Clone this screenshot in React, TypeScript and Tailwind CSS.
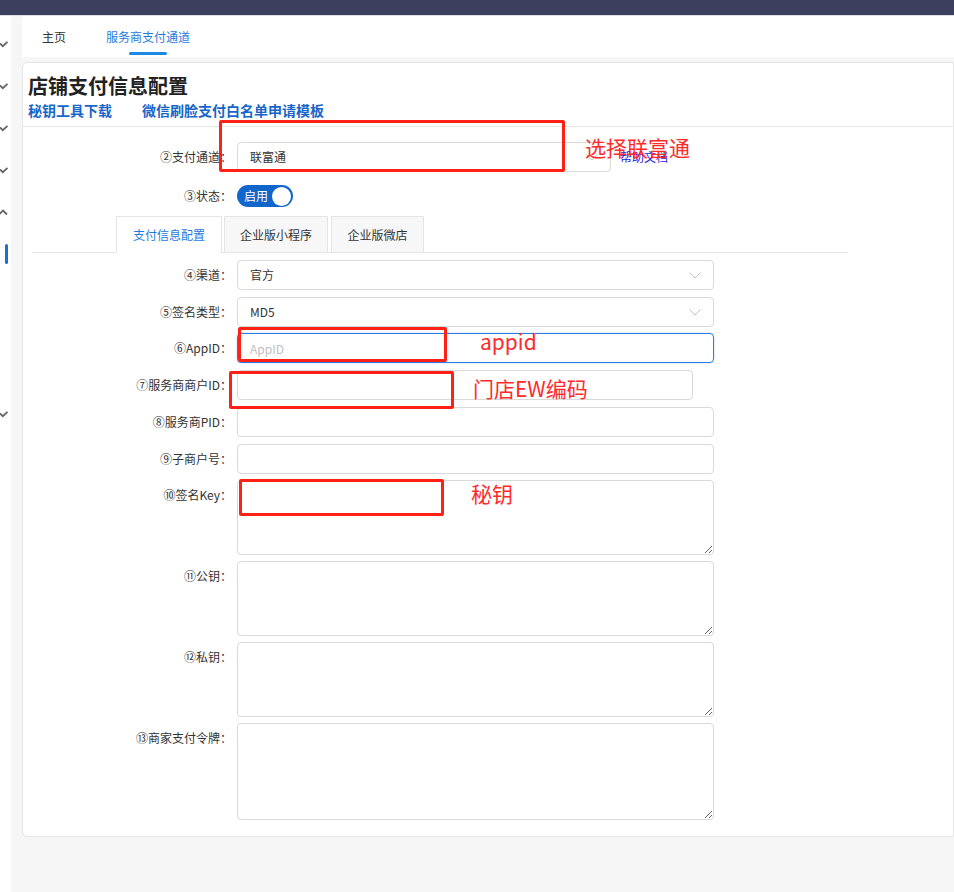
import React from "react";

function Chevron({ up = false }: { up?: boolean }) {
  return (
    <svg width="9" height="7" viewBox="0 0 9 7" className="block">
      {up ? (
        <path d="M-1 5.5 L3 1.5 L7 5.5" fill="none" stroke="#666" strokeWidth="1.8" />
      ) : (
        <path d="M0 2.5 L2.8 5.2 L7.5 0.8" fill="none" stroke="#666" strokeWidth="1.8" />
      )}
    </svg>
  );
}

function SelectArrow() {
  return (
    <svg width="12" height="7" viewBox="0 0 12 7">
      <path d="M0.5 0.5 L6 6 L11.5 0.5" fill="none" stroke="#c4c4c4" strokeWidth="1" />
    </svg>
  );
}

function Label({ text }: { text: string }) {
  return (
    <div className="w-[214px] shrink-0 text-right pr-[5px] text-[12px] leading-[30px] whitespace-nowrap text-[#333]">
      {text}
    </div>
  );
}

function SelectBox({ value, width = "w-[477px]" }: { value: string; width?: string }) {
  return (
    <div
      className={`${width} h-[30px] border border-[#d9d9d9] rounded-[4px] flex items-center justify-between pl-[12px] pr-[12px] text-[12px] text-[#333] bg-white`}
    >
      <span>{value}</span>
      <SelectArrow />
    </div>
  );
}

export default function App() {
  return (
    <div className="relative w-[954px] h-[892px] overflow-hidden bg-[#f6f6f6] font-['Noto_Sans_CJK_SC',sans-serif] text-[#333]">
      <div className="h-[15px] bg-[#3d3f5f]" />
      <div className="h-[1px] bg-[#dcdce4]" />
      <div className="flex h-[876px]">
        <aside className="w-[11px] shrink-0 bg-white flex flex-col pt-[7px] overflow-hidden">
          <div className="h-[42px] flex items-center"><Chevron /></div>
          <div className="h-[42px] flex items-center"><Chevron /></div>
          <div className="h-[42px] flex items-center"><Chevron /></div>
          <div className="h-[42px] flex items-center"><Chevron /></div>
          <div className="h-[42px] flex items-center"><Chevron up /></div>
          <div className="h-[42px] flex items-center pl-[5px]">
            <div className="w-[3px] h-[20px] rounded-[2px] bg-[#1a6fd9]" />
          </div>
          <div className="h-[118px]" />
          <div className="h-[42px] flex items-center"><Chevron /></div>
        </aside>
        <main className="flex-1 pl-[11px]">
          <div className="h-[41px] bg-white rounded-tl-[4px] flex items-stretch pl-[20px] text-[12px]">
            <div className="flex items-center text-[#333]">主页</div>
            <div className="relative flex items-center ml-[40px] text-[#1f7ae0]">
              服务商支付通道
              <div className="absolute bottom-[2px] left-1/2 -translate-x-1/2 w-[38px] h-[3px] rounded-[2px] bg-[#1e88e5]" />
            </div>
          </div>
          <div className="mt-[5px] h-[775px] bg-white border border-[#e6e6e6] rounded-l-[5px]">
            <div className="pl-[5px] pt-[9px] pb-[6px] border-b border-[#e8e8e8]">
              <div className="text-[20px] leading-[28px] font-bold text-[#222]">店铺支付信息配置</div>
              <div className="flex text-[14px] leading-[20px] font-bold text-[#1766c8]">
                <span>秘钥工具下载</span>
                <span className="ml-[30px]">微信刷脸支付白名单申请模板</span>
              </div>
            </div>

            <div className="pt-[15px]">
              <div className="flex items-center">
                <Label text="②支付通道：" />
                <SelectBox value="联富通" width="w-[374px]" />
                <span className="ml-[9px] text-[12px] text-[#2424d8]">帮助文档</span>
              </div>

              <div className="flex items-center mt-[13px] h-[22px]">
                <Label text="③状态：" />
                <div className="w-[56px] h-[22px] rounded-full bg-[#1166cc] flex items-center justify-between pl-[7px] pr-[2px]">
                  <span className="text-[12px] leading-[22px] text-white">启用</span>
                  <div className="w-[19px] h-[19px] rounded-full bg-white" />
                </div>
              </div>

              <div className="mt-[9px] ml-[9px] w-[816px] h-[37px] flex items-end border-b border-[#e5e5e5] pl-[84px] text-[12px]">
                <div className="relative top-[1px] w-[106px] h-[37px] flex items-center justify-center bg-white border border-b-0 border-[#e5e5e5] text-[#1f7ae0]">
                  支付信息配置
                </div>
                <div className="ml-[2px] w-[104px] h-[36px] flex items-center justify-center bg-[#f7f7f7] border border-b-0 border-[#e5e5e5] text-[#333]">
                  企业版小程序
                </div>
                <div className="ml-[3px] w-[93px] h-[36px] flex items-center justify-center bg-[#f7f7f7] border border-b-0 border-[#e5e5e5] text-[#333]">
                  企业版微店
                </div>
              </div>

              <div className="flex items-center mt-[7px]">
                <Label text="④渠道：" />
                <SelectBox value="官方" />
              </div>
              <div className="flex items-center mt-[7px]">
                <Label text="⑤签名类型：" />
                <SelectBox value="MD5" />
              </div>
              <div className="flex items-center mt-[6px]">
                <Label text="⑥AppID：" />
                <input
                  placeholder="AppID"
                  className="w-[477px] h-[30px] border border-[#2c7be5] rounded-[4px] pl-[12px] text-[12px] outline-none shadow-[0_0_2px_rgba(44,123,229,0.4)] placeholder:text-[#c0c0c0]"
                />
              </div>
              <div className="flex items-center mt-[7px]">
                <Label text="⑦服务商商户ID：" />
                <input className="w-[456px] h-[30px] border border-[#d9d9d9] rounded-[4px] pl-[12px] text-[12px] outline-none" />
              </div>
              <div className="flex items-center mt-[7px]">
                <Label text="⑧服务商PID：" />
                <input className="w-[477px] h-[30px] border border-[#d9d9d9] rounded-[4px] pl-[12px] text-[12px] outline-none" />
              </div>
              <div className="flex items-center mt-[7px]">
                <Label text="⑨子商户号：" />
                <input className="w-[477px] h-[30px] border border-[#d9d9d9] rounded-[4px] pl-[12px] text-[12px] outline-none" />
              </div>
              <div className="flex items-start mt-[6px]">
                <Label text="⑩签名Key：" />
                <textarea className="block w-[477px] h-[75px] border border-[#d9d9d9] rounded-[4px] outline-none" />
              </div>
              <div className="flex items-start mt-[6px]">
                <Label text="⑪公钥：" />
                <textarea className="block w-[477px] h-[75px] border border-[#d9d9d9] rounded-[4px] outline-none" />
              </div>
              <div className="flex items-start mt-[6px]">
                <Label text="⑫私钥：" />
                <textarea className="block w-[477px] h-[75px] border border-[#d9d9d9] rounded-[4px] outline-none" />
              </div>
              <div className="flex items-start mt-[6px]">
                <Label text="⑬商家支付令牌：" />
                <textarea className="block w-[477px] h-[97px] border border-[#d9d9d9] rounded-[4px] outline-none" />
              </div>
            </div>
          </div>
        </main>
      </div>

      {/* annotations */}
      <div className="absolute left-[219px] top-[120px] w-[346px] h-[52px] border-[3px] border-[#ff2116] rounded-[2px]" />
      <div className="absolute left-[585px] top-[134px] text-[21px] leading-[26px] text-[#ff2a2a]">选择联富通</div>

      <div className="absolute left-[238px] top-[327px] w-[209px] h-[35px] border-[3px] border-[#ff2116] rounded-[2px]" />
      <div className="absolute left-[480px] top-[328px] text-[21px] leading-[26px] text-[#ff2a2a]">appid</div>

      <div className="absolute left-[229px] top-[371px] w-[225px] h-[38px] border-[3px] border-[#ff2116] rounded-[2px]" />
      <div className="absolute left-[473px] top-[375px] text-[21px] leading-[26px] text-[#ff2a2a]">门店EW编码</div>

      <div className="absolute left-[239px] top-[479px] w-[205px] h-[37px] border-[3px] border-[#ff2116] rounded-[2px]" />
      <div className="absolute left-[471px] top-[480px] text-[21px] leading-[26px] text-[#ff2a2a]">秘钥</div>
    </div>
  );
}
